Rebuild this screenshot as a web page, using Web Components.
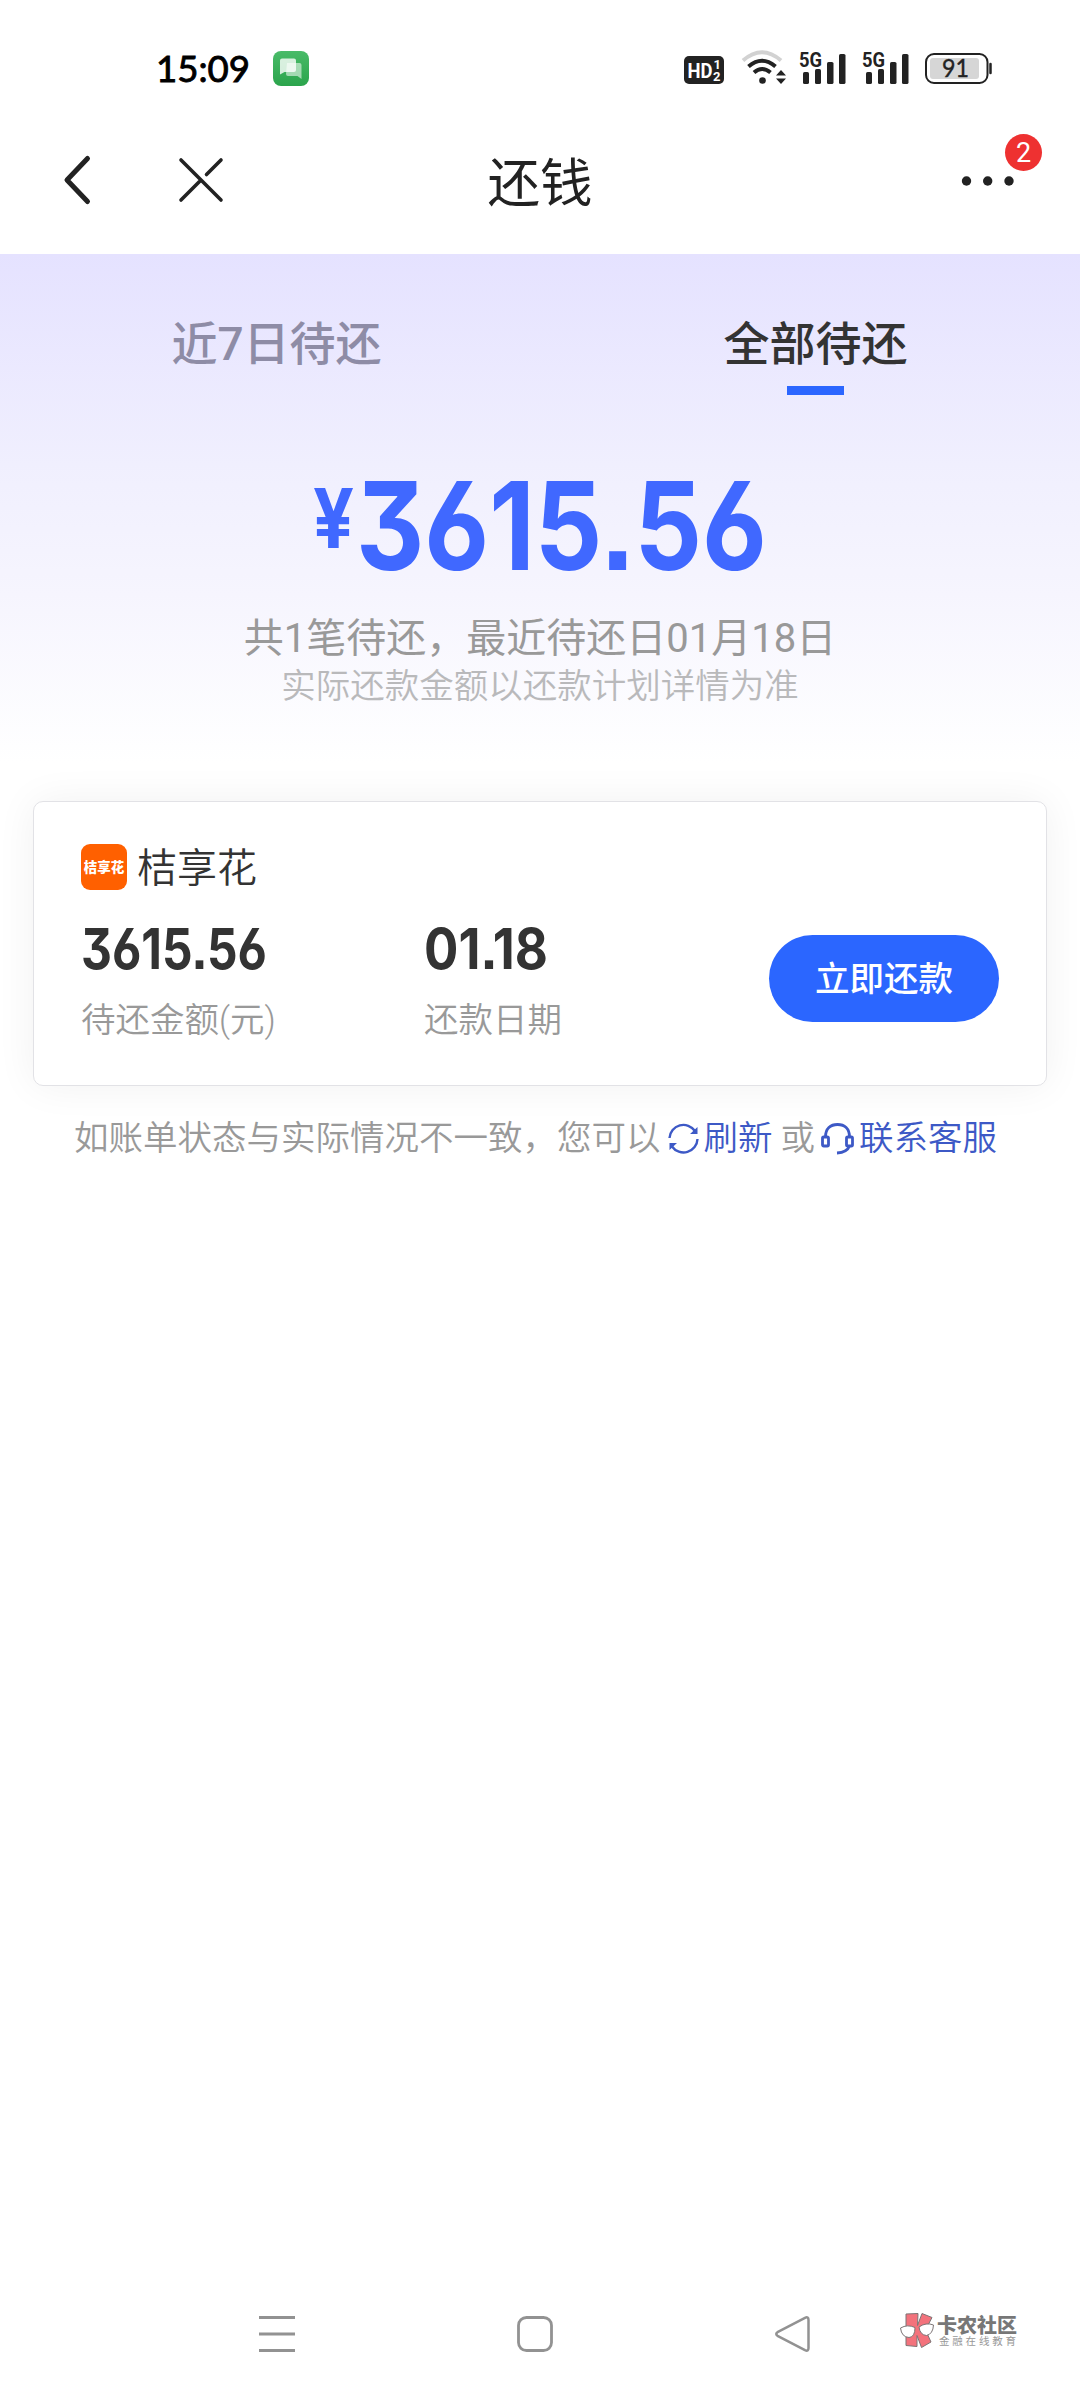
<!DOCTYPE html>
<html lang="zh-CN">
<head>
<meta charset="utf-8">
<meta name="viewport" content="width=1080">
<title>还钱</title>
<style>
  html, body { margin: 0; background: #fff; }
  body {
    width: 1080px;
    height: 2400px;
    overflow: hidden;
    display: flex;
    flex-direction: column;
    color: #333;
    font-family: Roboto, "Noto Sans CJK SC", sans-serif;
  }
  main { flex: 1; }
</style>
</head>
<body>
  <status-bar time="15:09" battery="91"></status-bar>
  <nav-bar badge="2">还钱</nav-bar>
  <main>
    <repay-summary amount="3615.56">
      <span slot="week">近7日待还</span>
      <span slot="all">全部待还</span>
      <span slot="info">共1笔待还，最近待还日01月18日</span>
      <span slot="hint">实际还款金额以还款计划详情为准</span>
    </repay-summary>
    <bill-card name="桔享花" amount="3615.56" date="01.18">立即还款</bill-card>
    <help-line>如账单状态与实际情况不一致，您可以</help-line>
  </main>
  <system-nav></system-nav>

<script>
class BaseElement extends HTMLElement {
  constructor() {
    super();
    this.attachShadow({ mode: 'open' });
  }

  connectedCallback() {
    this.shadowRoot.innerHTML = `<style>${this.styles()}</style>${this.markup()}`;
  }

  attr(name) {
    return this.getAttribute(name) || '';
  }
}

// Number set in narrow figures: "cap" is the digit height, "width" the run length
class FitNumber extends BaseElement {
  styles() {
    return `
      :host { display: block; flex: none; }
      svg { display: block; overflow: visible; }
      text {
        font-family: Inter, Roboto, sans-serif;
        font-feature-settings: "cv03", "cv09", "ss07";
        fill: currentColor;
      }
    `;
  }

  markup() {
    const cap = Number(this.attr('cap'));
    const width = Number(this.attr('width'));
    const weight = this.attr('weight') || 700;
    return `
      <svg width="${width}" height="${cap}">
        <text x="0" y="${cap}" font-size="${cap / 0.727}" font-weight="${weight}"
          textLength="${width}" lengthAdjust="spacingAndGlyphs">${this.textContent}</text>
      </svg>
    `;
  }
}

class SignalBars extends BaseElement {
  styles() {
    return `
      :host { display: block; width: 47px; height: 33px; }
      svg { display: block; overflow: visible; }
      text { font: 700 20px Roboto, sans-serif; fill: #222; }
    `;
  }

  markup() {
    return `
      <svg width="47" height="33" viewBox="0 0 47 33" fill="#222">
        <text x="-1" y="15.500" textLength="23" lengthAdjust="spacingAndGlyphs">5G</text>
        <rect x="3" y="21" width="6" height="12" rx="1.600"/>
        <rect x="15" y="18" width="6" height="15" rx="1.600"/>
        <rect x="27" y="11" width="6.500" height="22" rx="1.600"/>
        <rect x="39" y="3" width="6.500" height="30" rx="1.600"/>
      </svg>
    `;
  }
}

class StatusBar extends BaseElement {
  styles() {
    return `
      :host {
        display: flex;
        align-items: flex-start;
        box-sizing: border-box;
        height: 120px;
        padding: 51px 88px 0 156px;
        color: #000;
      }
      svg { display: block; overflow: visible; flex: none; }
      .time { margin-top: 5px; }
      .app { margin-left: 23px; }
      .right { display: flex; margin-left: auto; }
      .hd { margin-top: 5px; }
      .wifi { margin: 0 14px 0 18px; }
      signal-bars { margin-right: 16px; }
      .battery { margin: 2px 0 0 -1px; }
    `;
  }

  markup() {
    return `
      <svg class="time" width="94" height="26">
        <text x="0" y="26" textLength="94" lengthAdjust="spacingAndGlyphs"
          font-family="Lato, sans-serif" font-size="36.500" font-weight="400" stroke="#000" stroke-width=".9">${this.attr('time')}</text>
      </svg>
      <svg class="app" width="36" height="35" viewBox="0 0 36 35">
        <defs>
          <linearGradient id="g" x1="0" y1="0" x2="0" y2="1">
            <stop offset="0" stop-color="#49bb68"/>
            <stop offset="1" stop-color="#2ba44c"/>
          </linearGradient>
        </defs>
        <rect width="36" height="35" rx="8" fill="url(#g)"/>
        <path d="M14 12h12.500q2 0 2 2v14l-4-3H15q-2 0-2-2z" fill="#fff" opacity=".55"/>
        <path d="M9 7.500h12q2 0 2 2V19q0 2-2 2H11.500L7 23.500V9.500q0-2 2-2z" fill="#fff" opacity=".8"/>
      </svg>
      <div class="right">
        <svg class="hd" width="40" height="28" viewBox="0 0 40 28">
          <rect width="40" height="28" rx="5" fill="#222"/>
          <g fill="#fff" font-family="Roboto, sans-serif" font-weight="700">
            <text x="3.500" y="21.500" font-size="21" textLength="25" lengthAdjust="spacingAndGlyphs">HD</text>
            <text x="29.500" y="13" font-size="13">1</text>
            <text x="29" y="25" font-size="13">2</text>
          </g>
        </svg>
        <svg class="wifi" width="44" height="33" viewBox="0 0 44 33" fill="none" stroke-width="4">
          <path d="M1 9.500Q20-7 39 9.500" stroke="#d2d2d2"/>
          <path d="M6.500 15.500Q20 4 33.500 15.500" stroke="#222"/>
          <path d="M12 21.500Q20 14.500 28.500 21.500" stroke="#222"/>
          <circle cx="20.500" cy="29.500" r="3.300" fill="#222"/>
          <path d="M39 19l5 5.500H34zM39 33l5-5.500H34z" fill="#222"/>
        </svg>
        <signal-bars></signal-bars>
        <signal-bars></signal-bars>
        <svg class="battery" width="67" height="31" viewBox="0 0 67 31">
          <rect x="1" y="1" width="61.500" height="29" rx="8" fill="#fff" stroke="#222" stroke-width="2"/>
          <rect x="5" y="5" width="49" height="21" rx="3" fill="#d6d6d6"/>
          <path d="M65.500 11v9" stroke="#222" stroke-width="2.500" stroke-linecap="round"/>
          <text x="17" y="24" font-family="Lato, sans-serif" font-size="25" fill="#222" stroke="#222" stroke-width=".4"
            textLength="27" lengthAdjust="spacingAndGlyphs">${this.attr('battery')}</text>
        </svg>
      </div>
    `;
  }
}

class NavBar extends BaseElement {
  styles() {
    return `
      :host {
        display: grid;
        grid-template-columns: 1fr auto 1fr;
        align-items: center;
        height: 134px;
        padding: 0 38px 0 64px;
        color: #222;
      }
      svg { display: block; overflow: visible; }
      .left { display: flex; gap: 89px; align-items: center; margin-top: -14px; }
      h1 { margin: -6px 26px 0 0; font-size: 52.500px; font-weight: 400; line-height: 64px; }
      .more {
        position: relative;
        justify-self: end;
        width: 74px;
        margin-top: -13px;
      }
      .badge {
        position: absolute;
        left: 37px;
        top: -42px;
        width: 37px;
        height: 37px;
        border-radius: 50%;
        background: #ee3131;
        color: #fff;
        font-size: 27px;
        line-height: 38px;
        text-align: center;
      }
    `;
  }

  markup() {
    return `
      <div class="left">
        <svg width="26" height="48" viewBox="0 0 26 48" fill="none" stroke="#222" stroke-width="5" stroke-linecap="round" stroke-linejoin="round">
          <path d="M23.500 2.500L3 24l20.500 21.500"/>
        </svg>
        <svg width="44" height="44" viewBox="0 0 44 44" fill="none" stroke="#222" stroke-width="3.600" stroke-linecap="round">
          <path d="M2 2l40 40M42 2L27.500 16.500M21 23L2 42"/>
        </svg>
      </div>
      <h1><slot></slot></h1>
      <div class="more">
        <svg width="74" height="10" viewBox="0 0 74 10" fill="#222">
          <circle cx="-1.500" cy="5" r="4.700"/><circle cx="19.700" cy="5" r="4.700"/><circle cx="41" cy="5" r="4.700"/>
        </svg>
        <span class="badge">${this.attr('badge')}</span>
      </div>
    `;
  }
}

class RepaySummary extends BaseElement {
  styles() {
    return `
      :host {
        display: block;
        box-sizing: border-box;
        height: 547px;
        padding-top: 57px;
        background: linear-gradient(#e5e2ff 0, #f0effe 210px, #f6f5fe 340px, #fff 510px);
        text-align: center;
      }
      .tabs { display: grid; grid-template-columns: 539px 539px; padding-left: 7px; }
      .tab { font-size: 46px; font-weight: 500; line-height: 66px; color: #8e8ca6; }
      .tab.active { color: #333; }
      .tab.active::after {
        content: "";
        display: block;
        width: 57px;
        height: 9px;
        margin: 9px auto 0;
        background: #2b66ff;
      }
      .amount {
        display: flex;
        justify-content: center;
        gap: 2px;
        margin-top: 86px;
        color: #4068ff;
      }
      .amount fit-number:first-child { margin-top: 7px; }
      .info { margin-top: 44px; font-size: 40px; line-height: 50px; color: #999; }
      .hint { font-size: 34.500px; line-height: 44px; color: #b9b9bb; font-weight: 350; }
    `;
  }

  markup() {
    return `
      <div class="tabs">
        <div class="tab"><slot name="week"></slot></div>
        <div class="tab active"><slot name="all"></slot></div>
      </div>
      <div class="amount">
        <fit-number cap="60" width="41">¥</fit-number>
        <fit-number cap="89" width="411">${this.attr('amount')}</fit-number>
      </div>
      <div class="info"><slot name="info"></slot></div>
      <div class="hint"><slot name="hint"></slot></div>
    `;
  }
}

class BillCard extends BaseElement {
  styles() {
    return `
      :host {
        display: block;
        box-sizing: border-box;
        height: 285px;
        margin: 0 33px;
        padding: 42px 47px 0;
        border: 1px solid #e2e2e6;
        border-radius: 10px;
        background: #fff;
        box-shadow: 0 0 40px rgba(0, 0, 0, 0.06);
      }
      header { display: flex; align-items: center; height: 46px; }
      .logo {
        width: 46px;
        height: 46px;
        border-radius: 9px;
        background: #ff6000;
        color: #fff;
        font: 900 13.500px/45px "Noto Sans CJK SC", sans-serif;
        text-align: center;
      }
      .name { margin: 4px 0 0 10px; font-size: 40px; line-height: 46px; font-weight: 350; }
      .body { display: grid; grid-template-columns: 343px 345px 230px; margin-top: 38px; }
      .label { margin-top: 31px; font-size: 34.500px; line-height: 40px; color: #999; font-weight: 350; }
      button {
        height: 87px;
        margin: 7px 0 0;
        padding: 0;
        border: 0;
        border-radius: 44px;
        background: #2b66ff;
        color: #fff;
        font: 500 34.500px/84px Roboto, "Noto Sans CJK SC", sans-serif;
      }
    `;
  }

  markup() {
    return `
      <header>
        <span class="logo">${this.attr('name')}</span>
        <span class="name">${this.attr('name')}</span>
      </header>
      <div class="body">
        <div>
          <fit-number cap="41" width="186">${this.attr('amount')}</fit-number>
          <div class="label">待还金额(元)</div>
        </div>
        <div>
          <fit-number cap="41" width="124">${this.attr('date')}</fit-number>
          <div class="label">还款日期</div>
        </div>
        <button><slot></slot></button>
      </div>
    `;
  }
}

class HelpLine extends BaseElement {
  styles() {
    return `
      :host {
        display: flex;
        align-items: center;
        margin: 32px 0 0 74px;
        font-size: 34.500px;
        line-height: 40px;
        font-weight: 350;
        color: #999;
        white-space: nowrap;
      }
      a { display: flex; align-items: center; color: #3d59c6; }
      svg { display: block; flex: none; overflow: visible; }
      .refresh { margin-left: 7px; }
      .refresh svg { margin-right: 5px; }
      .or { margin: 0 6px 0 8px; }
      .service svg { margin-right: 5px; }
    `;
  }

  markup() {
    return `
      <span><slot></slot></span>
      <a class="refresh">
        <svg width="31" height="31" viewBox="0 0 31 31" fill="none" stroke="#3d59c6" stroke-width="2.400">
          <path d="M1.500 15A14 14 0 0 1 27 8M29.500 16A14 14 0 0 1 4 23.500"/>
          <path d="M29.500 4v7h-7.500zM1.500 27v-7H9z" fill="#3d59c6" stroke="none"/>
        </svg>
        <span>刷新</span>
      </a>
      <span class="or">或</span>
      <a class="service">
        <svg width="33" height="31" viewBox="0 0 33 31" fill="none" stroke="#3d59c6" stroke-width="2.800">
          <path d="M4.500 14C4.500 5.500 9.500 1.500 16.500 1.500S28.500 5.500 28.500 14M28.500 23Q26 29.500 16 30"/>
          <rect x="1.500" y="14" width="6" height="9" rx="1.200"/>
          <rect x="25.500" y="14" width="6" height="9" rx="1.200"/>
        </svg>
        <span>联系客服</span>
      </a>
    `;
  }
}

class BrandMark extends BaseElement {
  styles() {
    return `
      :host { display: flex; align-items: flex-start; gap: 3px; }
      svg { display: block; overflow: visible; }
      .text { font-family: "Liberation Sans", "Noto Sans CJK SC", sans-serif; white-space: nowrap; }
      .title { margin-top: 2px; font-size: 20px; line-height: 22px; font-weight: 900; color: #777; }
      .sub { margin: -2px 0 0 2px; font-size: 10.500px; line-height: 12px; letter-spacing: 2.800px; color: #999; }
    `;
  }

  markup() {
    return `
      <svg width="34" height="35" viewBox="0 0 34 35" stroke="#7d7576" stroke-width="1">
        <path d="M6 1l12-.5-.5 12L22 .5l10 4-6.500 12.500L31 29l-9.500 5.500-4.500-12v11L6 32.500z" fill="#f3727c"/>
        <path d="M.5 15q7-4 14.500-.5Q15 24 9 24.500 1.500 24 .5 15z" fill="#fff"/>
        <path d="M19 14q7-5 14.500-2Q33 21 26.500 22.500 20 22 19 14z" fill="#fff"/>
      </svg>
      <div class="text">
        <div class="title">卡农社区</div>
        <div class="sub">金融在线教育</div>
      </div>
    `;
  }
}

class SystemNav extends BaseElement {
  styles() {
    return `
      :host {
        display: flex;
        align-items: center;
        height: 132px;
        padding-left: 259px;
      }
      svg { display: block; overflow: visible; }
      .home { margin-left: 222px; }
      .back { margin-left: 222px; }
      brand-mark { margin: -7px 0 0 90px; }
    `;
  }

  markup() {
    return `
      <svg width="36" height="36" viewBox="0 0 36 36" stroke="#929292" stroke-width="3">
        <path d="M0 1.500h36M0 18h36M0 34.500h36"/>
      </svg>
      <svg class="home" width="36" height="36" viewBox="0 0 36 36" fill="none" stroke="#929292" stroke-width="2.800">
        <rect x="1.500" y="1.500" width="33" height="33" rx="8"/>
      </svg>
      <svg class="back" width="35" height="36" viewBox="0 0 35 36" fill="none" stroke="#929292" stroke-width="2.500" stroke-linejoin="round">
        <path d="M2.500 16.200L30 1.800q3.500-1.500 3.500 2.200v28q0 3.700-3.500 2.200L2.500 19.800q-2.500-1.800 0-3.600z"/>
      </svg>
      <brand-mark></brand-mark>
    `;
  }
}

customElements.define('fit-number', FitNumber);
customElements.define('signal-bars', SignalBars);
customElements.define('status-bar', StatusBar);
customElements.define('nav-bar', NavBar);
customElements.define('repay-summary', RepaySummary);
customElements.define('bill-card', BillCard);
customElements.define('help-line', HelpLine);
customElements.define('brand-mark', BrandMark);
customElements.define('system-nav', SystemNav);
</script>
</body>
</html>
